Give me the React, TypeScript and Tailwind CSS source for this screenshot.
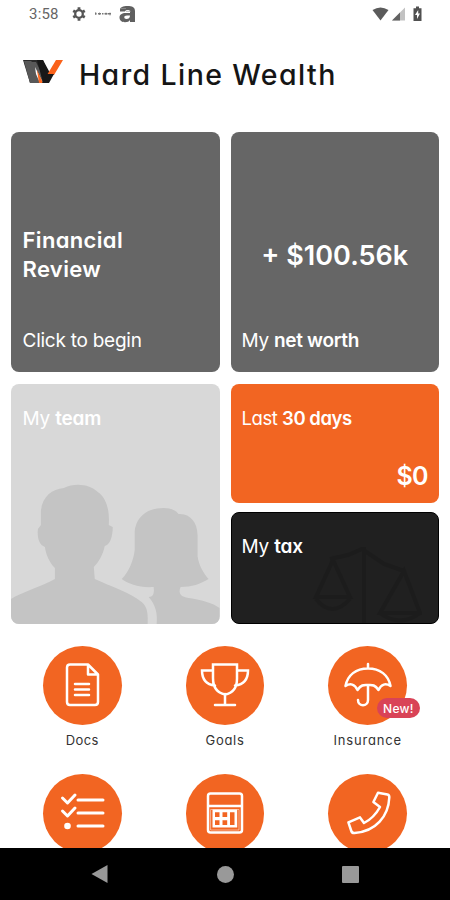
import type { ReactNode } from "react";

const stroke = {
  fill: "none",
  stroke: "#fff",
  strokeWidth: 2.5,
  strokeLinecap: "round" as const,
  strokeLinejoin: "round" as const,
};

function StatusBar() {
  return (
    <header className="flex h-7 shrink-0 items-center pl-[29px] pr-[28px] text-[#666]">
      <span className="w-[43px] font-[Roboto,sans-serif] text-[15px] leading-7 tracking-[0.2px]">3:58</span>
      <svg width="14" height="14" viewBox="0 0 14 14" fill="none" stroke="#555">
        <circle cx="7" cy="7" r="3.8" strokeWidth="2.3" />
        <path d="M7 .3v2.2M7 11.500v2.200M1.200 3.700l1.900 1.100M10.900 9.200l1.900 1.100M1.200 10.300l1.900-1.100M10.900 4.800l1.900-1.100" strokeWidth="2.800" />
      </svg>
      <svg className="ml-[9px]" width="17" height="6" viewBox="0 0 17 6" fill="none" stroke="#777" strokeWidth="1.400">
        <path d="M0 2.700h1.500M3 2.700h3M7 2.700h1.500M9.500 2.700h3M13 2.700h3" />
        <path d="M.7 1v3M4.500 1.500v2.500M11 1.500v2.500M15 1.500v3" strokeWidth=".7" />
      </svg>
      <svg className="ml-[7px]" width="17" height="18" viewBox="0 0 17 18" fill="#606060">
        <path fillRule="evenodd" d="M1 5C1 2 4 1 8.500 1S16 2 16 6v11h-5v-2c-1 1.500-2.500 2.200-5 2.200C2.800 17.200.5 15.500.5 12.500S3 8 6.500 8H11V6.500C11 5.300 10 5 8.500 5S6.500 5.500 6 6.500H1ZM8 10.500c-2 0-2.700.700-2.700 1.800S6 14 7.500 14C9.500 14 11 13 11 10.500Z" />
        <path d="M7 6.300h5M2 3.500h5" stroke="#999" strokeWidth=".7" />
      </svg>
      <div className="ml-auto flex items-center">
        <svg width="17" height="14" viewBox="0 0 17 14"><path d="M.5 3Q8.500-2 16.500 3L8.500 13.500Z" fill="#5b5b5b" /></svg>
        <svg className="ml-[3px]" width="13" height="14" viewBox="0 0 13 14"><path d="M13 .500V13.500H0Z" fill="#c2c2c2" /><path d="M8 5.500v8H0Z" fill="#626262" /></svg>
        <svg className="ml-[8px]" width="9" height="16" viewBox="0 0 9 16"><path d="M3 .500h3v1.700h2.500V15H.5V2.200H3Z" fill="#505050" /><path d="M5.200 4 2 9h2v4l3-5.500H5.200Z" fill="#fff" /></svg>
      </div>
    </header>
  );
}

function Logo() {
  return (
    <svg width="40" height="24" viewBox="0 0 40 24">
      <path d="M0 0h20l5 13v10H7Z" fill="#2a2a2a" />
      <path d="M1 1h7l3 3 9 19H7Z" fill="#585858" />
      <path d="M9 2h4l7 14v7h-2L8 6Z" fill="#585858" />
      <path d="m12 7 8 16h-3l-4-9Z" fill="#fff" />
      <path d="m14 10 6 13h-4Z" fill="#ff691f" />
      <path d="M14 0h6l7 13 5-3-7 13h-5Z" fill="#181818" />
      <path d="M33 0h7l-9 15h-7Z" fill="#fa621b" />
      <path d="M24 14h7l-5 9h-7Z" fill="#181818" />
    </svg>
  );
}

function Team() {
  return (
    <svg className="absolute inset-0 h-full w-full" viewBox="0 0 209 240" preserveAspectRatio="none" fill="#c4c4c4">
      <path d="M0 215C9 209 29 203 44 195V184C38 178 35 170 34 163C28 161 26 153 27 145L30 141V127C31 113 41 105 53 104C65 98 80 101 87 108C96 114 99 127 98 141L102 143C102 153 99 161 94 162C92 171 88 178 83 183L84 195C99 202 119 208 131 218C138 224 137 232 137 240H0Z" />
      <path d="M111 195C118 188 123 176 124 166V147C126 132 137 124 153 124C161 124 166 127 168 130C179 129 187 138 187 151V172C188 181 193 189 198 195C190 200 181 203 170 203C167 210 171 213 178 214C192 216 202 219 209 224V240H146C147 229 145 221 138 213C142 213 144 210 143 203C129 204 118 200 111 195Z" />
    </svg>
  );
}

function Shortcut({ label, labelClass, children }: { label?: string; labelClass?: string; children: ReactNode }) {
  return (
    <div className="flex h-[128px] flex-col items-center">
      <div className="relative flex h-[78.5px] w-[78.5px] shrink-0 items-center justify-center rounded-full bg-[#f26522]">
        {children}
      </div>
      {label && <span className={`mt-[5px] text-[13px] leading-5 text-[#333] ${labelClass}`}>{label}</span>}
    </div>
  );
}

function Icon({ children }: { children: ReactNode }) {
  return <svg width="52" height="52" viewBox="0 0 52 52" {...stroke}>{children}</svg>;
}

export default function App() {
  return (
    <main className="flex h-[900px] w-[450px] flex-col overflow-hidden bg-white font-[Inter,sans-serif] [font-feature-settings:'cv11']">
      <StatusBar />
      <div className="flex h-[104px] shrink-0 items-start pl-[23px] pt-[32px]">
        <Logo />
        <h1 className="ml-4 mt-px whitespace-nowrap text-[28.5px] font-medium leading-7 tracking-[1.4px] text-[#151515]">Hard Line Wealth</h1>
      </div>

      <section className="grid shrink-0 grid-cols-2 gap-x-[11px] gap-y-3 px-[11px] text-white">
        <article className="flex h-[240px] flex-col rounded-lg bg-[#666] px-[11.5px] pt-[94px]">
          <h2 className="text-[22px] font-semibold leading-[28.5px] tracking-[0.35px]">Financial<br />Review</h2>
          <p className="mt-[44px] text-[19px] leading-7 tracking-[-0.25px]">Click to begin</p>
        </article>
        <article className="flex h-[240px] flex-col rounded-lg bg-[#666] px-[11px] pt-[106px]">
          <p className="whitespace-nowrap text-center text-[27px] font-semibold leading-9">+ $100.56k</p>
          <p className="mt-[53px] text-[19px] leading-7 tracking-[-0.3px]">My <b className="font-semibold">net worth</b></p>
        </article>
        <article className="relative h-[240px] overflow-hidden rounded-lg bg-[#d8d8d8] px-[11.5px] pt-[21px]">
          <Team />
          <p className="relative text-[19px] leading-7 tracking-[-0.2px]">My <b className="font-semibold">team</b></p>
        </article>
        <div className="flex flex-col gap-[9px]">
          <article className="flex h-[119px] flex-col rounded-lg bg-[#f26522] px-[11px] pt-5">
            <p className="text-[18.5px] leading-7 tracking-[-0.45px]">Last <b className="font-semibold">30 days</b></p>
            <p className="mt-[26px] text-right text-[25px] font-semibold leading-9 tracking-[-0.6px]">$0</p>
          </article>
          <article className="relative h-[112px] rounded-lg border border-black bg-[#202020] px-[10px] pt-5">
            <svg className="absolute bottom-0 right-4 opacity-[0.12]" width="110" height="76" viewBox="0 0 110 76" fill="none" stroke="#000" strokeWidth="4">
              <path d="M52 0v76M18 12l18-4 14-6 22 15 20 7M21 13 4 50h34ZM92 24 68 66h40ZM4 52q16 20 34 0M68 66q20 15 40 0" />
            </svg>
            <p className="relative text-[19px] leading-7 tracking-[-0.2px]">My <b className="font-semibold">tax</b></p>
          </article>
        </div>
      </section>

      <section className="mt-[22px] grid min-h-0 flex-1 grid-cols-3 content-start overflow-hidden px-[11px]">
        <Shortcut label="Docs" labelClass="tracking-[0.4px]">
          <Icon>
            <path d="M14 5.500h18l10 10v27.500q0 3-3 3H14q-3 0-3-3V8.500q0-3 3-3ZM32 6v9.500h9.500M19 25h14M19 30.500h14M19 36h14" />
          </Icon>
        </Shortcut>
        <Shortcut label="Goals" labelClass="tracking-[0.7px]">
          <Icon>
            <path d="M14 5.500h24v14q0 14-12 16Q14 33 14 19ZM14 11.500H3c0 8 4 14 13 15M38 11.500h11c0 8-4 14-13 15M26 35v11M16 46h20" strokeLinejoin="miter" />
          </Icon>
        </Shortcut>
        <Shortcut label="Insurance" labelClass="tracking-[0.8px]">
          <Icon>
            <path d="M26 5v4M3.500 27C5.500 16 14 9.500 26 9.500s20.500 6.500 22.500 17.500c-5-3-9-2-12 4-4-6-7-5-10.500-5s-6.500-1-10.500 5c-3-6-7-7-12-4M26 26v15c0 7-10 7-10 0" />
          </Icon>
          <span className="absolute -right-[13px] top-[52px] h-[20px] w-[43px] rounded-full bg-[#d94357] text-center text-[12px] font-medium leading-[21px] tracking-[0.3px] text-white">New!</span>
        </Shortcut>
        <Shortcut>
          <Icon>
            <path d="m6.500 11 5 5 7.500-8M6.500 24l5 5 7.500-8M22 13h25M22 26h25M22 39h25" strokeWidth="3" />
            <circle cx="11.500" cy="39" r="3.300" fill="#fff" stroke="none" />
          </Icon>
        </Shortcut>
        <Shortcut>
          <Icon>
            <path d="M11.500 6.500h29q2.500 0 2.500 2.500v34q0 2.500-2.500 2.500h-29q-2.500 0-2.500-2.500V9q0-2.500 2.500-2.500ZM9 19h34" />
            <path d="M12 22.500h28v20.500H12Z" strokeWidth="1" opacity=".5" />
            <path d="M13.500 22.500h24.700v18H13.500ZM16 25.300v4.700h4.500v-4.700ZM23.500 25.300v4.700h4.700v-4.700ZM31 25.300v12.700h4.500v-12.700ZM16 33.300v4.700h4.500v-4.700ZM23.500 33.300v4.700h4.700v-4.700Z" fill="#fff" fillRule="evenodd" stroke="none" />
          </Icon>
        </Shortcut>
        <Shortcut>
          <Icon>
            <path d="M36 5.800 45.500 7.500Q47.500 8 47.300 10.500C46.500 29 34 44.500 12.500 46Q10 46.200 9.300 44L6.400 35.400 18 30.400 22 36Q32 31 38 20L31.400 15Z" />
          </Icon>
        </Shortcut>
      </section>

      <nav className="flex h-[52px] shrink-0 items-center justify-between bg-black pl-[91px] pr-[91px]">
        <svg width="18" height="18" viewBox="0 0 18 18"><path d="m.5 9 16-9v18Z" fill="#999" /></svg>
        <div className="h-[17px] w-[17px] rounded-full bg-[#999]" />
        <div className="h-[17px] w-[17px] rounded-[1px] bg-[#999]" />
      </nav>
    </main>
  );
}
